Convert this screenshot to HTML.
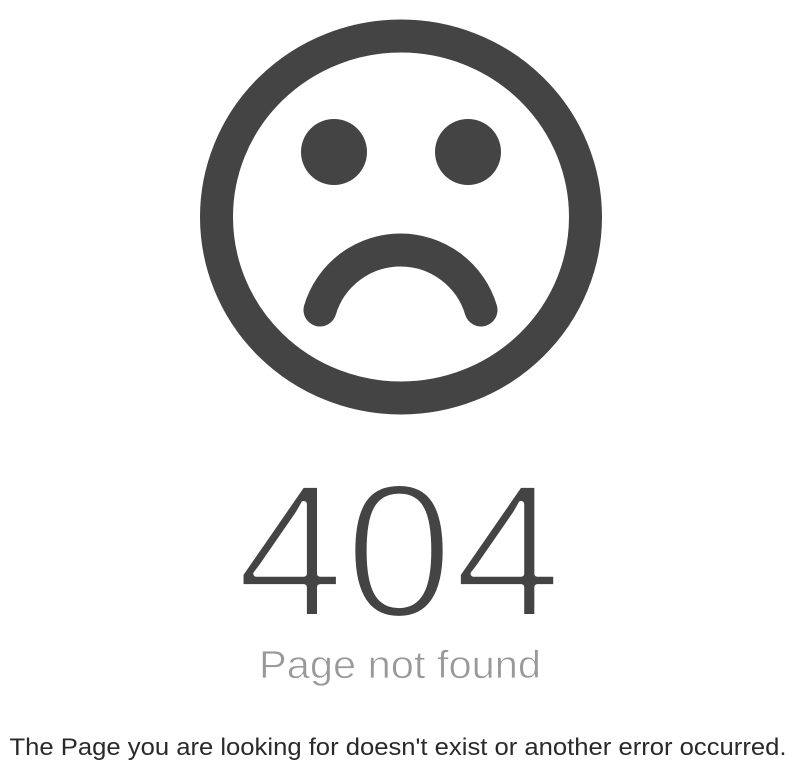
<!DOCTYPE html>
<html><head><meta charset="utf-8"><style>
html,body{margin:0;padding:0;background:#fff;width:800px;height:770px;overflow:hidden}
svg{display:block}
</style></head><body>
<svg width="800" height="770" viewBox="0 0 800 770" xmlns="http://www.w3.org/2000/svg">
<ellipse cx="401" cy="217" rx="184.5" ry="181" fill="none" stroke="#444" stroke-width="33"/>
<circle cx="334" cy="152" r="33" fill="#444"/>
<circle cx="468" cy="152" r="33" fill="#444"/>
<path d="M320 310 A84 84 0 0 1 481 310" fill="none" stroke="#444" stroke-width="33" stroke-linecap="round"/>
<text x="399" y="617" text-anchor="middle" font-family="Liberation Sans, sans-serif" font-size="192" fill="#444" stroke="#fff" stroke-width="6" stroke-linejoin="round" textLength="326" lengthAdjust="spacingAndGlyphs">404</text>
<text x="400" y="678" text-anchor="middle" font-family="Liberation Sans, sans-serif" font-size="39" fill="#999" stroke="#fff" stroke-width="0.7" stroke-linejoin="round" textLength="282" lengthAdjust="spacingAndGlyphs">Page not found</text>
<text x="398" y="755" text-anchor="middle" font-family="Liberation Sans, sans-serif" font-size="24" fill="#2a2a2a" textLength="777" lengthAdjust="spacingAndGlyphs">The Page you are looking for doesn't exist or another error occurred.</text>
</svg>
</body></html>
